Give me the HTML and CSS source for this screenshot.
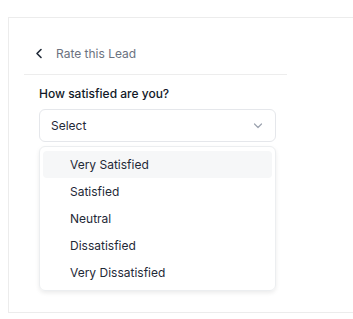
FILE: index.html
```html
<html>
   <head>
      <link rel="stylesheet" href="styles.css">
   </head>
   <body>
      <div class="card">
         <div class="header">
            <svg class="backIcon" width="8" height="11" viewBox="0 0 8 11"><path d="M6 1.5 L2 5.5 L6 9.5" fill="none" stroke="#1f2937" stroke-width="1.6" stroke-linecap="round" stroke-linejoin="round"/></svg>
            <span class="title">Rate this Lead</span>
         </div>
         <div class="form">
            <div class="label">How satisfied are you?</div>
            <div class="select">
               <span>Select</span>
               <svg width="10" height="6" viewBox="0 0 10 6"><path d="M1.5 1 L5 4.5 L8.5 1" fill="none" stroke="#9ca3af" stroke-width="1.2" stroke-linecap="round" stroke-linejoin="round"/></svg>
            </div>
            <div class="menu">
               <div class="option active">Very Satisfied</div>
               <div class="option">Satisfied</div>
               <div class="option">Neutral</div>
               <div class="option">Dissatisfied</div>
               <div class="option">Very Dissatisfied</div>
            </div>
         </div>
      </div>
   </body>
</html>
```
FILE: styles.css
```css
body {
margin: 0;
padding: 17px 6px 6px 8px;
font-family: Inter, "Liberation Sans", sans-serif;
background: #ffffff;
}
.card {
width: 337px;
height: 294px;
border: 1px solid #ececec;
padding: 0 0 0 15px;
}
.header {
display: flex;
align-items: center;
width: 263px;
height: 57px;
padding-top: 14px;
border-bottom: 1.5px solid #ededed;
box-sizing: border-box;
}
.backIcon {
margin-left: 11px;
margin-right: 13px;
}
.title {
font-size: 12px;
color: #6b7280;
}
.form {
padding-left: 15px;
width: 237px;
}
.label {
margin-top: 11px;
font-size: 12px;
font-weight: 500;
color: #111827;
line-height: 16px;
}
.select {
margin-top: 7px;
height: 33px;
border: 1px solid #e5e7eb;
border-radius: 6px;
display: flex;
align-items: center;
justify-content: space-between;
padding: 0 12px 0 11px;
font-size: 12px;
color: #1f2937;
box-sizing: border-box;
}
.menu {
margin-top: 4px;
border: 1px solid #eceef0;
border-radius: 6px;
padding: 4px 3px 4px 3px;
box-shadow: 0 2px 4px rgba(0, 0, 0, 0.08);
}
.option {
height: 27px;
line-height: 27px;
padding-left: 27px;
font-size: 12px;
color: #1f2937;
border-radius: 4px;
}
.active {
background: #f6f7f8;
}
```
